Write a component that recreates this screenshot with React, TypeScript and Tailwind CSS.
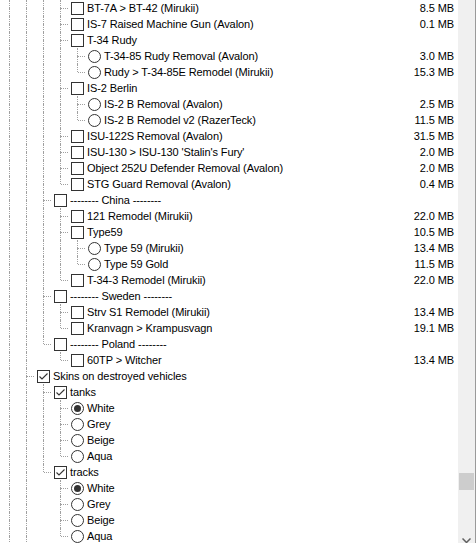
import React from 'react';

type Row = {
  level: number;
  label: string;
  kind: 'check' | 'radio';
  checked?: boolean;
  size?: string;
};

const rows: Row[] = [
  { level: 4, label: 'BT-7A > BT-42 (Mirukii)', kind: 'check', size: '8.5 MB' },
  { level: 4, label: 'IS-7 Raised Machine Gun (Avalon)', kind: 'check', size: '0.1 MB' },
  { level: 4, label: 'T-34 Rudy', kind: 'check' },
  { level: 5, label: 'T-34-85 Rudy Removal (Avalon)', kind: 'radio', size: '3.0 MB' },
  { level: 5, label: 'Rudy > T-34-85E Remodel (Mirukii)', kind: 'radio', size: '15.3 MB' },
  { level: 4, label: 'IS-2 Berlin', kind: 'check' },
  { level: 5, label: 'IS-2 B Removal (Avalon)', kind: 'radio', size: '2.5 MB' },
  { level: 5, label: 'IS-2 B Remodel v2 (RazerTeck)', kind: 'radio', size: '11.5 MB' },
  { level: 4, label: 'ISU-122S Removal (Avalon)', kind: 'check', size: '31.5 MB' },
  { level: 4, label: "ISU-130 > ISU-130 'Stalin's Fury'", kind: 'check', size: '2.0 MB' },
  { level: 4, label: 'Object 252U Defender Removal (Avalon)', kind: 'check', size: '2.0 MB' },
  { level: 4, label: 'STG Guard Removal (Avalon)', kind: 'check', size: '0.4 MB' },
  { level: 3, label: '-------- China --------', kind: 'check' },
  { level: 4, label: '121 Remodel (Mirukii)', kind: 'check', size: '22.0 MB' },
  { level: 4, label: 'Type59', kind: 'check', size: '10.5 MB' },
  { level: 5, label: 'Type 59 (Mirukii)', kind: 'radio', size: '13.4 MB' },
  { level: 5, label: 'Type 59 Gold', kind: 'radio', size: '11.5 MB' },
  { level: 4, label: 'T-34-3 Remodel (Mirukii)', kind: 'check', size: '22.0 MB' },
  { level: 3, label: '-------- Sweden --------', kind: 'check' },
  { level: 4, label: 'Strv S1 Remodel (Mirukii)', kind: 'check', size: '13.4 MB' },
  { level: 4, label: 'Kranvagn > Krampusvagn', kind: 'check', size: '19.1 MB' },
  { level: 3, label: '-------- Poland --------', kind: 'check' },
  { level: 4, label: '60TP > Witcher', kind: 'check', size: '13.4 MB' },
  { level: 2, label: 'Skins on destroyed vehicles', kind: 'check', checked: true },
  { level: 3, label: 'tanks', kind: 'check', checked: true },
  { level: 4, label: 'White', kind: 'radio', checked: true },
  { level: 4, label: 'Grey', kind: 'radio' },
  { level: 4, label: 'Beige', kind: 'radio' },
  { level: 4, label: 'Aqua', kind: 'radio' },
  { level: 3, label: 'tracks', kind: 'check', checked: true },
  { level: 4, label: 'White', kind: 'radio', checked: true },
  { level: 4, label: 'Grey', kind: 'radio' },
  { level: 4, label: 'Beige', kind: 'radio' },
  { level: 4, label: 'Aqua', kind: 'radio' },
];

// does a sibling at `level` follow row i (before climbing out of it)?
function hasNext(i: number, level: number) {
  for (let j = i + 1; j < rows.length; j++) {
    if (rows[j].level < level) return false;
    if (rows[j].level === level) return true;
  }
  // off-screen roots keep going
  return level <= 2;
}

const dot = 'border-dotted border-[#a0a0a0]';

function Guide({ full, connector, half }: { full?: boolean; connector?: boolean; half?: boolean }) {
  return (
    <div className="flex w-[17px] h-[16px] shrink-0 pl-[9px]">
      <div className="flex flex-col w-px">
        <div className={`h-[8px] ${full || connector ? `border-l ${dot}` : ''}`} />
        <div className={`h-[8px] ${full || (connector && !half) ? `border-l ${dot}` : ''}`} />
      </div>
      {connector && <div className={`w-[7px] h-[9px] border-b ${dot}`} />}
    </div>
  );
}

function CheckBox({ checked }: { checked?: boolean }) {
  return (
    <div className="w-[13px] h-[13px] shrink-0 border border-[#333333] bg-white flex items-center justify-center">
      {checked && (
        <svg width="11" height="11" viewBox="0 0 11 11">
          <path d="M1.5 5.5 L4 8 L9.5 2.5" fill="none" stroke="#333333" strokeWidth="1.1" />
        </svg>
      )}
    </div>
  );
}

function Radio({ checked }: { checked?: boolean }) {
  return (
    <div className="w-[13px] h-[13px] shrink-0 rounded-full border border-[#333333] bg-white flex items-center justify-center">
      {checked && <div className="w-[7px] h-[7px] rounded-full bg-[#333333]" />}
    </div>
  );
}

function TreeRow({ row, index }: { row: Row; index: number }) {
  const cells = [];
  for (let c = 0; c < row.level; c++) {
    if (c < row.level - 1) {
      cells.push(<Guide key={c} full={hasNext(index, c + 1)} />);
    } else {
      cells.push(<Guide key={c} connector half={!hasNext(index, row.level)} />);
    }
  }
  return (
    <div className="flex items-center h-[16px]">
      {cells}
      <div className="ml-[3px] flex items-center">
        {row.kind === 'check' ? <CheckBox checked={row.checked} /> : <Radio checked={row.checked} />}
      </div>
      <span className="pl-[3px] flex-1 whitespace-nowrap">{row.label}</span>
      {row.size && <span className="pr-[4px] whitespace-nowrap">{row.size}</span>}
    </div>
  );
}

export default function App() {
  return (
    <div
      className="w-[476px] h-[543px] overflow-hidden bg-white flex text-[11px] leading-[16px] tracking-[-0.1px] text-black"
      style={{ fontFamily: '"Liberation Sans", Arial, sans-serif' }}
    >
      <div className="flex-1 flex flex-col">
        {rows.map((row, i) => (
          <TreeRow key={i} row={row} index={i} />
        ))}
      </div>
      <div className="w-[18px] shrink-0 flex">
        <div className="w-[17px] bg-[#f0f0f0] flex flex-col items-center">
          <div className="h-[473px] shrink-0" />
          <div className="h-[17px] w-[15px] shrink-0 bg-[#cdcdcd]" />
          <div className="h-[48px] shrink-0" />
          <svg width="9" height="6" viewBox="0 0 9 6" className="shrink-0">
            <path d="M0.5 0.5 L4.5 4.5 L8.5 0.5" fill="none" stroke="#606060" strokeWidth="1.5" />
          </svg>
        </div>
        <div className="w-px bg-[#9a9a9a]" />
      </div>
    </div>
  );
}
